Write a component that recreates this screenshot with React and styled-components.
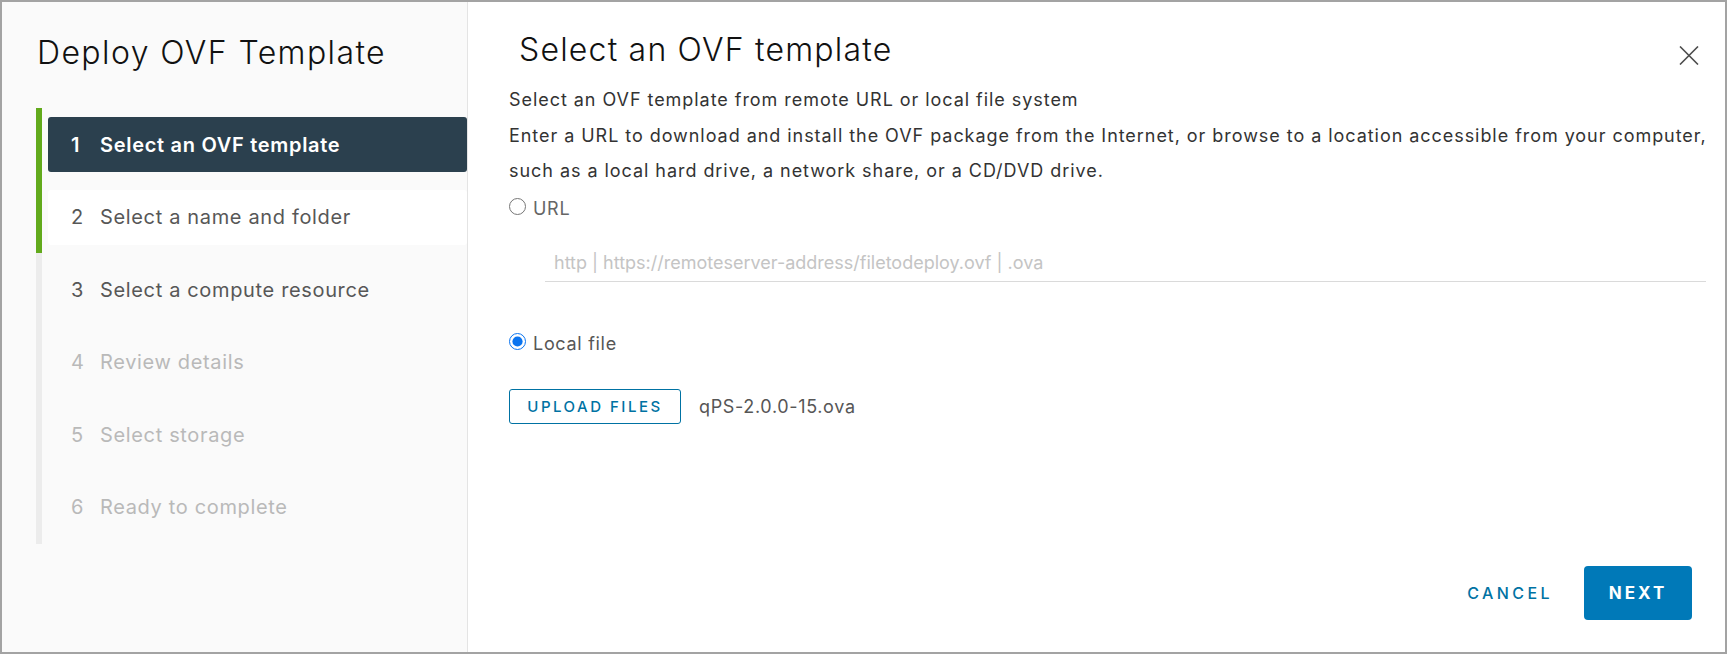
import React from "react";
import styled, { createGlobalStyle } from "styled-components";

const steps = [
  { n: 1, label: "Select an OVF template", state: "active", bar: true },
  { n: 2, label: "Select a name and folder", state: "next", bar: true },
  { n: 3, label: "Select a compute resource", state: "open", bar: false },
  { n: 4, label: "Review details", state: "locked", bar: false },
  { n: 5, label: "Select storage", state: "locked", bar: false },
  { n: 6, label: "Ready to complete", state: "locked", bar: false },
];

const CloseIcon = () => (
  <svg width="20" height="19" viewBox="0 0 20 19">
    <path d="M1 0.5 L19 18.5 M19 0.5 L1 18.5" stroke="#4d4d4d" strokeWidth="1.6" fill="none" />
  </svg>
);

export default function App() {
  return (
    <>
      <GlobalStyle />
      <Frame>
        <Sidebar>
          <SideTitle>Deploy OVF Template</SideTitle>
          <StepList>
            {steps.map((s) => (
              <StepSlot key={s.n} bar={s.bar}>
                <StepBox state={s.state}>
                  <StepNum>{s.n}</StepNum>
                  <span>{s.label}</span>
                </StepBox>
              </StepSlot>
            ))}
          </StepList>
        </Sidebar>
        <Main>
          <Header>
            <Heading>Select an OVF template</Heading>
            <CloseButton>
              <CloseIcon />
            </CloseButton>
          </Header>
          <Body>
            <Text>Select an OVF template from remote URL or local file system</Text>
            <Text>
              Enter a URL to download and install the OVF package from the Internet, or browse to a
              location accessible from your computer, such as a local hard drive, a network share, or a
              CD/DVD drive.
            </Text>
            <RadioRow>
              <Radio type="radio" name="src" />
              <RadioLabel muted>URL</RadioLabel>
            </RadioRow>
            <UrlInput placeholder="http | https://remoteserver-address/filetodeploy.ovf | .ova" />
            <RadioRow spaced>
              <Radio type="radio" name="src" defaultChecked />
              <RadioLabel>Local file</RadioLabel>
            </RadioRow>
            <UploadRow>
              <OutlineButton>UPLOAD FILES</OutlineButton>
              <FileName>qPS-2.0.0-15.ova</FileName>
            </UploadRow>
          </Body>
          <Footer>
            <FlatButton>CANCEL</FlatButton>
            <PrimaryButton>NEXT</PrimaryButton>
          </Footer>
        </Main>
      </Frame>
    </>
  );
}

const GlobalStyle = createGlobalStyle`
  * { box-sizing: border-box; }
  body {
    margin: 0;
    font-family: Inter, "Noto Sans", sans-serif;
    background: #fff;
  }
`;

const Frame = styled.div`
  width: 1727px;
  height: 654px;
  border: 2px solid #a3a3a3;
  display: flex;
  background: #fff;
`;

const Sidebar = styled.div`
  width: 466px;
  flex-shrink: 0;
  background: #fafafa;
  border-right: 1px solid #e4e4e4;
  padding: 31px 0 0 34px;
`;

const SideTitle = styled.h1`
  margin: 0 0 0 1px;
  font-size: 32px;
  line-height: 40px;
  font-weight: 300;
  color: #111;
  letter-spacing: 1.4px;
`;

const StepList = styled.div`
  margin-top: 35px;
  display: flex;
  flex-direction: column;
`;

const StepSlot = styled.div`
  height: 72.6px;
  padding: 9px 0 8.6px 6px;
  border-left: 6px solid ${({ bar }) => (bar ? "#62aa1c" : "#ececec")};
`;

const StepBox = styled.div`
  height: 55px;
  display: flex;
  align-items: center;
  padding-left: 23px;
  border-radius: 3px;
  font-size: 20px;
  letter-spacing: ${({ state }) => (state === "active" ? "0.7px" : "0.65px")};
  font-weight: ${({ state }) => (state === "active" ? 600 : 400)};
  background: ${({ state }) =>
    state === "active" ? "#2b404e" : state === "next" ? "#fff" : "transparent"};
  color: ${({ state }) =>
    state === "active" ? "#fff" : state === "locked" ? "#b9b9b9" : "#575757"};
`;

const StepNum = styled.span`
  width: 29px;
`;

const Main = styled.div`
  flex: 1;
  display: flex;
  flex-direction: column;
  background: #fff;
`;

const Header = styled.div`
  display: flex;
  justify-content: space-between;
  align-items: flex-start;
  padding: 28px 26px 0 51px;
`;

const Heading = styled.h2`
  margin: 0;
  font-size: 32px;
  line-height: 40px;
  font-weight: 300;
  letter-spacing: 1.2px;
  color: #111;
`;

const CloseButton = styled.button`
  margin-top: 16px;
  padding: 0;
  border: 0;
  background: none;
  display: flex;
  cursor: pointer;
`;

const Body = styled.div`
  padding: 12px 0 0 41px;
  display: flex;
  flex-direction: column;
  align-items: flex-start;
`;

const Text = styled.p`
  margin: 0;
  font-size: 18px;
  line-height: 35.5px;
  letter-spacing: 0.95px;
  color: #333;
`;

const RadioRow = styled.label`
  display: flex;
  align-items: flex-start;
  gap: 7px;
  margin-top: ${({ spaced }) => (spaced ? "51px" : "9px")};
`;

const Radio = styled.input`
  width: 17px;
  height: 17px;
  margin: 0;
  accent-color: #0a74f0;
`;

const RadioLabel = styled.span`
  padding-top: 1.5px;
  font-size: 18px;
  line-height: 20px;
  letter-spacing: 0.7px;
  color: ${({ muted }) => (muted ? "#666" : "#565656")};
`;

const UrlInput = styled.input`
  margin: 25.5px 0 0 36px;
  width: 1161px;
  height: 37px;
  padding: 0 9px;
  border: 0;
  border-bottom: 1px solid #dadada;
  font-family: inherit;
  font-size: 18px;
  color: #333;
  outline: none;
  &::placeholder {
    color: #c4c4c4;
  }
`;

const UploadRow = styled.div`
  display: flex;
  align-items: center;
  gap: 18px;
  margin-top: 34.5px;
`;

const OutlineButton = styled.button`
  width: 172px;
  height: 35px;
  padding: 0;
  border: 1px solid #0072a3;
  border-radius: 3px;
  background: #fff;
  color: #0072a3;
  font-family: inherit;
  font-size: 15px;
  font-weight: 500;
  letter-spacing: 2.5px;
  cursor: pointer;
`;

const FileName = styled.span`
  font-size: 18px;
  letter-spacing: 0.65px;
  color: #565656;
`;

const Footer = styled.div`
  margin-top: auto;
  display: flex;
  justify-content: flex-end;
  align-items: center;
  gap: 31px;
  padding: 0 33px 32px 0;
`;

const FlatButton = styled.button`
  border: 0;
  padding: 0;
  background: none;
  color: #0072a3;
  font-family: inherit;
  font-size: 16px;
  font-weight: 500;
  letter-spacing: 3.4px;
  cursor: pointer;
`;

const PrimaryButton = styled.button`
  width: 108px;
  height: 54px;
  border: 0;
  border-radius: 4px;
  background: #0079b8;
  color: #fff;
  font-family: inherit;
  font-size: 17px;
  font-weight: 700;
  letter-spacing: 3px;
  cursor: pointer;
`;
